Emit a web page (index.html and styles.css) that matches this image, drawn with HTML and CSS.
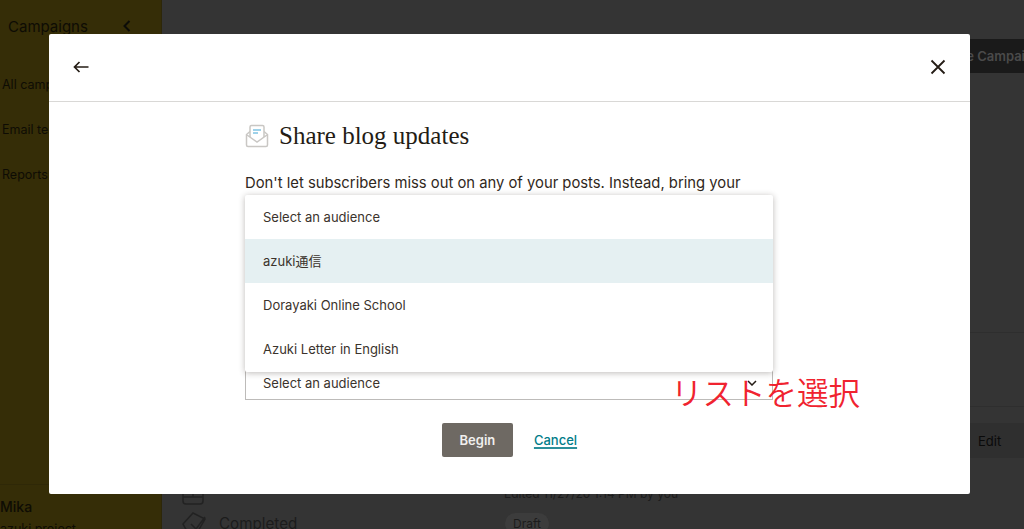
FILE: index.html
```html
<!DOCTYPE html>
<html lang="en">
<head>
<meta charset="utf-8">
<title>Share blog updates</title>
<link rel="stylesheet" href="styles.css">
</head>
<body>
<div class="page">
  <aside class="sidebar">
    <div class="side-head"><span>Campaigns</span>
      <svg class="side-chevron" width="10" height="14" viewBox="0 0 10 14"><path d="M7.500 2 2.500 7l5 5" fill="none" stroke="#0c0c08" stroke-width="2"/></svg>
    </div>
    <nav class="side-nav">
      <div class="side-item">All campaigns</div>
      <div class="side-item">Email templates</div>
      <div class="side-item">Reports</div>
    </nav>
    <div class="side-user">
      <div class="side-name">Mika</div>
      <div class="side-org">azuki project</div>
    </div>
  </aside>
  <main class="main">
    <div class="main-top"><button class="create">Create Campaign</button></div>
    <div class="row row-a"></div>
    <div class="row row-b"><button class="edit">Edit</button></div>
    <div class="row row-c">
      <svg class="row-icon" width="22" height="26" viewBox="0 0 22 26"><path d="M1 8h20v13a3 3 0 0 1-3 3H4a3 3 0 0 1-3-3zM1 17h20M11 8v9" fill="none" stroke="#222" stroke-width="1.500"/></svg>
      <span class="edited">Edited 11/27/20 1:14 PM by you</span>
    </div>
    <div class="row row-d">
      <svg class="row-icon" width="38" height="26" viewBox="0 0 38 26"><path d="M2 14 12 3l12 6-8 14H7zM10 14l5 5 9-12" fill="none" stroke="#222" stroke-width="1.500"/></svg>
      <span class="status">Completed</span>
      <span class="draft">Draft</span>
    </div>
  </main>
</div>

<section class="modal">
  <header class="modal-head">
    <svg width="16" height="12" viewBox="0 0 16 12"><path d="M15.500 6H1.500M6.500 1 1.500 6l5 5" fill="none" stroke="#241c15" stroke-width="1.700"/></svg>
    <svg width="16" height="16" viewBox="0 0 16 16"><path d="M1.500 1.500l13 13M14.500 1.500l-13 13" fill="none" stroke="#241c15" stroke-width="1.800"/></svg>
  </header>
  <div class="modal-body">
    <div class="title-row">
      <svg class="title-icon" width="24" height="24" viewBox="0 0 24 24">
        <path d="M5 7.500 1.500 10.500v10.500a1.500 1.500 0 0 0 1.500 1.500h18a1.500 1.500 0 0 0 1.500-1.500V10.500L19 7.500" fill="none" stroke="#c9c7c4" stroke-width="1.500"/>
        <path d="M5 13V3a1.500 1.500 0 0 1 1.500-1.500h11A1.500 1.500 0 0 1 19 3v10" fill="none" stroke="#c9c7c4" stroke-width="1.500"/>
        <path d="M2 11l10 7 10-7" fill="none" stroke="#c9c7c4" stroke-width="1.500"/>
        <path d="M8 6h8M8 9h5" stroke="#7fc4e3" stroke-width="1.500"/>
      </svg>
      <h1 class="title">Share blog updates</h1>
    </div>
    <p class="lead">Don't let subscribers miss out on any of your posts. Instead, bring your</p>
    <div class="field-input"></div>
    <div class="field-select">
      <span>Select an audience</span>
      <svg width="10" height="6" viewBox="0 0 10 6"><path d="M1 1l4 4 4-4" fill="none" stroke="#241c15" stroke-width="1.500"/></svg>
    </div>
    <div class="actions">
      <button class="begin">Begin</button>
      <a class="cancel" href="#">Cancel</a>
    </div>
    <ul class="menu">
      <li class="menu-item">Select an audience</li>
      <li class="menu-item menu-item-active">azuki通信</li>
      <li class="menu-item">Dorayaki Online School</li>
      <li class="menu-item">Azuki Letter in English</li>
    </ul>
  </div>
</section>
<div class="note">リストを選択</div>
</body>
</html>
```
FILE: styles.css
```css
* { box-sizing: border-box; }
html, body { margin: 0; height: 529px; overflow: hidden; }
body { font-family: "Inter", "Noto Sans CJK JP", sans-serif; color: #241c15; background: #343434; }
button { font: inherit; border: 0; }

.page { display: flex; height: 529px; }
.sidebar { width: 162px; flex: none; background: #352d07; color: #0e0c04; display: flex; flex-direction: column; border-right: 1px solid #2d2709; }
.side-head { display: flex; justify-content: space-between; align-items: flex-start; padding: 17px 29px 0 8px; font-size: 15px; height: 67px; }
.side-chevron { margin-top: 2px; }
.side-nav { display: flex; flex-direction: column; }
.side-item { font-size: 12.500px; height: 45px; padding: 10px 0 0 2px; white-space: nowrap; }
.side-user { margin-top: auto; padding-top: 20px; height: 45px; border-top: 1px solid #2f2807; }
.side-name { font-size: 14px; font-weight: 500; line-height: 17px; margin-top: -7px; }
.side-org { font-size: 12.500px; margin-top: 6px; }

.main { flex: 1; min-width: 0; display: flex; flex-direction: column; }
.main-top { height: 333px; flex: none; display: flex; justify-content: flex-end; align-items: flex-start; padding-top: 39px; border-bottom: 1px solid #2e2e2e; }
.create { background: #1a1a1a; color: #4a4a4a; font-weight: 600; font-size: 13px; height: 34px; width: 140px; margin-right: -32px; white-space: nowrap; text-align: left; padding-left: 16px; }
.row { display: flex; align-items: center; flex: none; }
.row-a { height: 74px; border-bottom: 1px solid #2e2e2e; }
.row-b { height: 71px; justify-content: flex-end; align-items: flex-start; padding-top: 16px; }
.edit { width: 70px; height: 35px; background: #2f2f2f; color: #0a0a0a; font-size: 13px; text-align: left; padding-left: 24px; }
.row-c { height: 30px; padding-left: 20px; }
.row-icon { flex: none; }
.edited { font-size: 12px; color: #1c1c1c; margin-left: 300px; white-space: nowrap; }
.row-d { height: 30px; padding-left: 19px; }
.status { font-size: 15.200px; color: #1c1c1c; width: 286px; }
.draft { font-size: 12px; color: #1c1c1c; background: #3c3c3c; padding: 3px 8px; border-radius: 12px; }

.modal { position: absolute; left: 49px; top: 34px; width: 921px; height: 460px; background: #fff; border-radius: 2px; }
.modal-head { height: 68px; border-bottom: 1px solid #d9d8d6; display: flex; justify-content: space-between; align-items: center; padding: 0 24px 1px 24px; }
.modal-body { position: relative; width: 528px; margin-left: 196px; padding-top: 17px; }
.title-row { display: flex; align-items: center; gap: 10px; height: 34px; }
.title-icon { flex: none; }
.title { margin: 0; font: 400 25px/34px "Liberation Serif", serif; color: #241c15; }
.lead { margin: 20px 0 0; font-size: 14.800px; line-height: 20px; white-space: nowrap; color: #2f2720; }
.field-input { height: 34px; margin-top: 117px; border-right: 1px solid #bdbbb9; border-bottom: 1px solid #bdbbb9; }
.field-select { height: 33px; margin-top: 23px; border: 1px solid #bdbbb9; border-top: 0; display: flex; align-items: center; justify-content: space-between; padding: 0 15px 0 17px; font-size: 13px; color: #3b332c; }
.actions { display: flex; align-items: center; justify-content: center; gap: 21px; margin-top: 23px; padding-left: 1px; }
.begin { width: 71px; height: 34px; background: #6e6963; color: #f0efee; font-size: 13px; font-weight: 600; border-radius: 2px; }
.cancel { font-size: 13px; font-weight: 500; color: #007c89; text-decoration: underline; text-decoration-color: #2b8f9a; text-decoration-thickness: 2px; text-underline-offset: 2px; }
.menu { position: absolute; left: 0; top: 93px; width: 528px; margin: 0; padding: 0 0 1px; list-style: none; background: #fff; border-radius: 2px; box-shadow: 0 1px 6px rgba(36, 28, 21, .3); }
.menu-item { height: 44px; display: flex; align-items: center; padding-left: 18px; font-size: 13px; color: #3b332c; }
.menu-item-active { background: #e5f0f2; padding-bottom: 1px; }
.note { position: absolute; left: 671px; top: 369px; font: 350 31.500px/44px "Noto Sans CJK JP", sans-serif; color: #f0232f; white-space: nowrap; }
```
